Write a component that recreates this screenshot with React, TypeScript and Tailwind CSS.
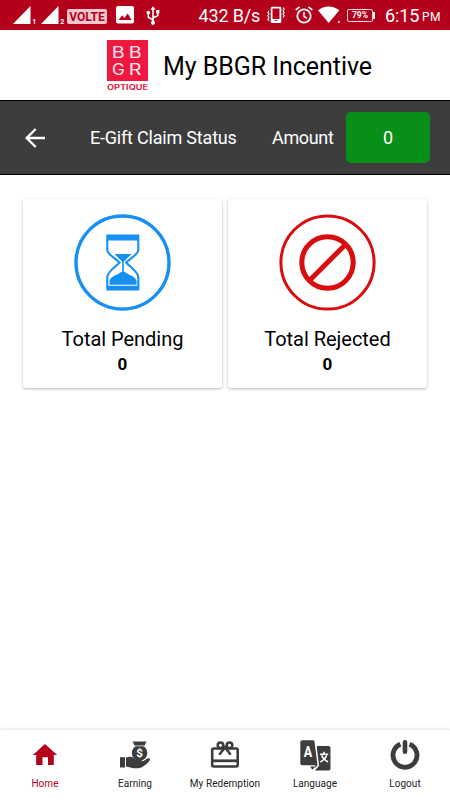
import type { ReactNode } from 'react';

function Signal({ n }: { n: string }) {
  return (
    <svg width="24" height="20" viewBox="0 0 24 20">
      <path d="M0 18 17.5 0V18Z" fill="#fff" />
      <text x="19.2" y="17.5" fontSize="7" fontWeight="700" fill="#fff" fontFamily="Roboto, sans-serif">{n}</text>
    </svg>
  );
}

function StatusBar() {
  return (
    <div className="flex h-[30px] items-start bg-[#b4001b] pl-[13px] pt-[6px] text-white">
      <Signal n="1" />
      <div className="ml-1"><Signal n="2" /></div>
      <div className="ml-[2px] mt-[3px] flex h-[15px] w-10 items-center justify-center rounded-[2px] bg-[#f3c5cc] text-[12px] font-bold leading-none text-[#b4001b]">
        <span>VOLTE</span>
      </div>
      <svg className="ml-[9px]" width="18" height="18" viewBox="0 0 18 18">
        <rect width="18" height="17.5" rx="2" fill="#fff" />
        <path d="M2.7 14 6.2 9.3 8.4 12 11.7 7.6 15.6 14Z" fill="#b4001b" />
      </svg>
      <svg className="ml-3" width="14" height="20" viewBox="0 0 14 20">
        <path d="M7 2V17M7 14 2.3 11.2V7M7 12 11.8 9.6V6" fill="none" stroke="#fff" strokeWidth="1.6" />
        <path d="M7 0 9.5 3.7H4.5ZM10.1 4h3.3v3.3h-3.3Z" fill="#fff" />
        <circle cx="2.3" cy="6.5" r="1.8" fill="#fff" />
        <circle cx="7" cy="16.8" r="2.1" fill="#fff" />
      </svg>
      <span className="ml-[38.5px] w-[61.5px] whitespace-nowrap text-[18px] leading-5 tracking-[-0.15px]">432 B/s</span>
      <svg className="ml-[7px]" width="18" height="18" viewBox="0 0 18 18">
        <rect x="4.6" y="1.7" width="8.8" height="14.5" rx=".5" fill="none" stroke="#fff" strokeWidth="1.8" />
        <path d="M5 13h8v3H5Z" fill="#fff" />
        <path d="M7.5 14.5h3" stroke="#b4001b" strokeWidth=".8" />
        <path d="m2 5-1.2 1.5L2 8 .8 9.7 2 11.5.8 13.3 2 15M16 1.5 17.2 3 16 4.7l1.2 1.7L16 8l1.2 1.7L16 11.5" fill="none" stroke="#fff" strokeWidth="1.1" />
      </svg>
      <svg className="ml-[10px]" width="18" height="18" viewBox="0 0 18 18" fill="none" stroke="#fff">
        <circle cx="9" cy="10" r="6.7" strokeWidth="1.8" />
        <path d="M9 6v4.4l3.1 2" strokeWidth="1.5" />
        <path d="M.7 4 4.6.8M17.3 4 13.4.8" strokeWidth="1.7" />
      </svg>
      <svg className="ml-[5px]" width="24" height="18" viewBox="0 0 24 18">
        <path d="M0 4.2C6-.9 15.3-.9 21.4 4.2L10.7 17Z" fill="#fff" />
        <path d="M20 15h1.7v1.8H20Z" fill="#fff" />
      </svg>
      <div className="ml-[5px] mt-[3px] flex items-center">
        <div className="flex h-[13px] w-[26px] items-center justify-center rounded-[2px] border border-[#f7dce0] text-[8.5px] font-bold leading-none">79%</div>
        <div className="h-[7px] w-[2px] bg-white" />
      </div>
      <span className="ml-[10px] whitespace-nowrap text-[18px] leading-5 tracking-[-0.15px]">6:15</span>
      <span className="ml-[3px] whitespace-nowrap pt-[2px] text-[12px] leading-[19px] tracking-[0.2px]">PM</span>
    </div>
  );
}

function Logo() {
  return (
    <svg width="42" height="52" viewBox="0 0 42 52" fontFamily="Inter, sans-serif">
      <rect width="41" height="41" fill="#f01840" />
      <path d="M0 .5h41" stroke="#f02020" />
      <g fill="#ffe9ed" fontSize="15.2">
        <text transform="translate(4.8 18) scale(1.3 1)">B</text>
        <text transform="translate(21.8 18) scale(1.3 1)">B</text>
        <text transform="translate(5 34.7) scale(1.13 1)">G</text>
        <text transform="translate(21.8 34.7) scale(1.3 1)">R</text>
      </g>
      <text x="0" y="49.8" fill="#e51b43" fontSize="6.9" fontWeight="700" textLength="41" lengthAdjust="spacingAndGlyphs">OPTIQUE</text>
    </svg>
  );
}

function Card({ label, children }: { label: string; children: ReactNode }) {
  return (
    <section className="flex h-[189px] w-[199px] flex-col items-center rounded-[3px] bg-white pt-[15px] shadow-[0_1px_3px_rgba(0,0,0,0.28)]">
      {children}
      <h2 className="mt-4 whitespace-nowrap text-[20px] leading-6 tracking-[-0.03px] text-black">{label}</h2>
      <p className="mt-[1px] text-[17px] font-bold leading-6 text-black">0</p>
    </section>
  );
}

function Hourglass() {
  return (
    <svg width="97" height="97" viewBox="0 0 97 97">
      <circle cx="48.5" cy="48.5" r="46.5" fill="none" stroke="#1690f4" strokeWidth="3.4" />
      <g fill="#1690f4">
        <path d="M32.3 20.5h33v6h-33ZM32.3 71.8h33v4.7h-33Z" />
        <path d="M40.5 40h17L49.8 47.8v9.7c6 4 11 4.5 12.7 9v4.3H35.5v-4.3c1.7-4.5 6.7-5 12.7-9V47.8Z" />
      </g>
      <path d="M33.3 25v11c0 4.5 7.4 7.6 12.2 12.5-4.8 5.2-12.2 9.6-12.2 14.5V74M64.3 25v11c0 4.5-7.4 7.6-12.2 12.5 4.8 5.2 12.2 9.6 12.2 14.5V74" fill="none" stroke="#1690f4" strokeWidth="2.1" />
    </svg>
  );
}

function Prohibited() {
  return (
    <svg width="97" height="97" viewBox="0 0 97 97" fill="none" stroke="#d90c10">
      <circle cx="48.5" cy="48.5" r="46.6" strokeWidth="3" />
      <circle cx="48.5" cy="48.5" r="25.7" strokeWidth="5" />
      <path d="M30.5 66.5 66.5 30.5" strokeWidth="5" />
    </svg>
  );
}

function HomeIcon() {
  return (
    <svg width="30" height="32" viewBox="0 0 30 32">
      <path d="M15 4 27.2 15H23.8V25H18V17.3H12.5V25H6.2V15H2.8Z" fill="#b4001b" />
    </svg>
  );
}

function EarningIcon() {
  return (
    <svg width="30" height="32" viewBox="0 0 30 32">
      <path d="M12.5 1.5H26.5L24.2 6.2H15.1ZM0 17.2H5V27.5H0ZM6 17.5c3-1.2 6-.8 8 .7l1.4 1.3h5c1 0 1.5.8 1.3 1.8 2-.2 3.8-1.6 5.5-2.8 1.5-1 3.4.2 2.5 1.7-1.3 2.4-4 4.6-7 6.5-3.8 2.3-8.5 1.9-12.3.7L6 26.5Z" fill="#3d3d3d" />
      <circle cx="19.6" cy="13" r="7.8" fill="#3d3d3d" />
      <path d="M15.2 5.8h8.8" stroke="#fff" strokeWidth=".7" />
      <text x="19.6" y="16.8" textAnchor="middle" fontSize="11.5" fontWeight="700" fill="#fff" fontFamily="Roboto, sans-serif">$</text>
    </svg>
  );
}

function GiftIcon() {
  return (
    <svg width="30" height="32" viewBox="0 0 30 32" fill="none" stroke="#3d3d3d">
      <rect x="2.2" y="8.5" width="25.5" height="18" rx="1.5" strokeWidth="2.6" />
      <path d="M2 20.8h26" strokeWidth="2.8" />
      <circle cx="10.5" cy="5.2" r="2.8" strokeWidth="2.5" />
      <circle cx="19.5" cy="5.2" r="2.8" strokeWidth="2.5" />
      <path d="M9.3 14.8 15 7.2 20.7 14.8" strokeWidth="2.5" />
    </svg>
  );
}

function LanguageIcon() {
  return (
    <svg width="31" height="32" viewBox="0 0 31 32">
      <path d="M17 6H28.5Q30.5 6 30.5 8V28.5Q30.5 30.5 28.5 30.5H15Z" fill="#3d3d3d" />
      <path d="M2.4.2H12.7Q14.6.2 15.1 2L18.2 25.2H2.4Q.3 25.2.3 23.2V2.3Q.3.2 2.4.2Z" fill="#3d3d3d" />
      <path d="m15.2 1.3 3.1 24.3-4.4 4.8" fill="none" stroke="#fff" strokeWidth="1.5" />
      <path d="M10.3 26.5h5.3l-3.4 3.2Z" fill="#3d3d3d" />
      <text x="8.1" y="17" textAnchor="middle" fontSize="15.2" fontWeight="700" fill="#fff" textLength="8.5" lengthAdjust="spacingAndGlyphs" fontFamily="Roboto, sans-serif">A</text>
      <path d="M20 14.3h8.2M24 11.8v2.5M21.7 15.3c1.1 3.2 3.3 5 6.4 6.7M26.7 15.3c-1.1 3.2-3.3 5-6.4 6.7" fill="none" stroke="#fff" strokeWidth="1.6" />
    </svg>
  );
}

function PowerIcon() {
  return (
    <svg width="30" height="32" viewBox="0 0 30 32" fill="none" stroke="#3d3d3d">
      <path d="M10.4 4.2A12 12 0 1 0 19.6 4.2" strokeWidth="4.8" />
      <path d="M15 2.4V11.8" strokeWidth="4.6" strokeLinecap="round" />
    </svg>
  );
}

const tabs = [
  { label: 'Home', icon: <HomeIcon /> },
  { label: 'Earning', icon: <EarningIcon /> },
  { label: 'My Redemption', icon: <GiftIcon /> },
  { label: 'Language', icon: <LanguageIcon /> },
  { label: 'Logout', icon: <PowerIcon /> },
];

export default function App() {
  return (
    <div className="flex h-[800px] w-[450px] flex-col overflow-hidden bg-white font-['Roboto',sans-serif]">
      <StatusBar />
      <header className="flex h-[71px] items-start border-b border-black bg-white pl-[107px] pt-[10px]">
        <Logo />
        <h1 className="ml-[14px] mt-[11px] whitespace-nowrap text-[25px] leading-8 tracking-[-0.05px] text-black">My BBGR Incentive</h1>
      </header>
      <div className="flex h-[74px] items-center border-b border-black bg-[#3d3d3d] pl-[25px] text-[18px] text-white">
        <svg width="21" height="20" viewBox="0 0 21 20" fill="none" stroke="#fff" strokeWidth="2.4">
          <path d="M20 10H2M10.7 1 1.7 10l9 9" />
        </svg>
        <span className="ml-11 w-[182px] whitespace-nowrap tracking-[-0.2px]">E-Gift Claim Status</span>
        <span className="w-[74px] whitespace-nowrap tracking-[-0.35px]">Amount</span>
        <div className="flex h-[51px] w-[84px] items-center justify-center rounded-[5px] bg-[#078f18]">0</div>
      </div>
      <main className="flex flex-1 items-start gap-[6px] pl-[23px] pt-6">
        <Card label="Total Pending"><Hourglass /></Card>
        <Card label="Total Rejected"><Prohibited /></Card>
      </main>
      <nav className="grid h-[71px] grid-cols-5 border-t border-[#eeeeee] bg-white shadow-[0_-1px_2px_rgba(0,0,0,0.06)]">
        {tabs.map((tab, i) => (
          <div key={tab.label} className={`flex flex-col items-center pt-[10px] text-[10px] leading-3 ${i === 0 ? 'text-[#b4001b]' : 'text-[#222222]'}`}>
            {tab.icon}
            <span className="mt-[6px] whitespace-nowrap tracking-[0.05px]">{tab.label}</span>
          </div>
        ))}
      </nav>
    </div>
  );
}
